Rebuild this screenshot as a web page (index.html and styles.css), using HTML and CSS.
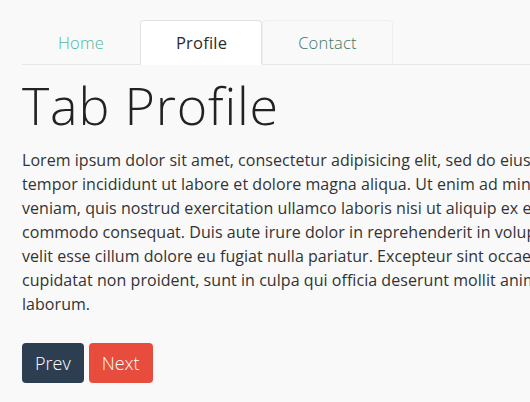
FILE: index.html
```html
<!DOCTYPE html>
<html lang="en">
<head>
    <meta charset="UTF-8">
    <meta name="viewport" content="width=device-width, initial-scale=1.0">
    <title>Tabs</title>
    <link rel="stylesheet" href="styles.css">
</head>
<body>
    <div class="container">
        <ul class="tabs">
            <li class="tab"><a class="tab-link" href="#home">Home</a></li>
            <li class="tab active"><a class="tab-link" href="#profile">Profile</a></li>
            <li class="tab hover"><a class="tab-link" href="#contact">Contact</a></li>
        </ul>

        <div class="tab-pane">
            <h1 class="title">Tab Profile</h1>
            <p class="text">Lorem ipsum dolor sit amet, consectetur adipisicing elit, sed do eiusmod<br>tempor incididunt ut labore et dolore magna aliqua. Ut enim ad minim<br>veniam, quis nostrud exercitation ullamco laboris nisi ut aliquip ex ea<br>commodo consequat. Duis aute irure dolor in reprehenderit in voluptate<br>velit esse cillum dolore eu fugiat nulla pariatur. Excepteur sint occaecat<br>cupidatat non proident, sunt in culpa qui officia deserunt mollit anim id est<br>laborum.</p>
        </div>

        <div class="pager">
            <button class="btn btn-prev">Prev</button>
            <button class="btn btn-next">Next</button>
        </div>
    </div>
</body>
</html>
```

FILE: styles.css
```css
body {
    margin: 0;
    background-color: #f9f9f9;
    font-family: "Open Sans", sans-serif;
    color: #333;
    overflow: hidden;
}

.container {
    padding: 20px 0 0 22px;
}

.tabs {
    display: flex;
    margin: 0;
    padding: 0;
    list-style: none;
    border-bottom: 1px solid #e6e6e6;
}

.tab {
    margin-bottom: -1px;
}

.tab-link {
    display: block;
    padding: 11px 35px;
    line-height: 21px;
    font-size: 16.5px;
    font-weight: 300;
    letter-spacing: 0.2px;
    color: #4fb89f;
    text-decoration: none;
    border: 1px solid transparent;
    border-radius: 4px 4px 0 0;
}

.tab.active .tab-link {
    padding-right: 34px;
    color: #2b2b2b;
    font-weight: 400;
    background-color: #fff;
    border-color: #e2e2e2 #e2e2e2 transparent;
}

.tab.hover .tab-link {
    color: #3d7a63;
    border-color: #eee #eee #e6e6e6;
}

.title {
    margin: 11px 0 15px;
    font-size: 52px;
    font-weight: 300;
    line-height: 1.1;
    letter-spacing: 0.8px;
    color: #222;
}

.text {
    margin: 0;
    font-size: 16px;
    line-height: 24px;
    letter-spacing: 0.05px;
    white-space: nowrap;
}

.pager {
    display: flex;
    gap: 5px;
    margin-top: 27px;
}

.btn {
    padding: 9px 13px;
    font-family: inherit;
    font-size: 18px;
    font-weight: 300;
    line-height: 22px;
    color: #fff;
    border: 0;
    border-radius: 4px;
    cursor: pointer;
}

.btn-prev {
    background-color: #2c3e50;
}

.btn-next {
    background-color: #e74c3c;
}
```
